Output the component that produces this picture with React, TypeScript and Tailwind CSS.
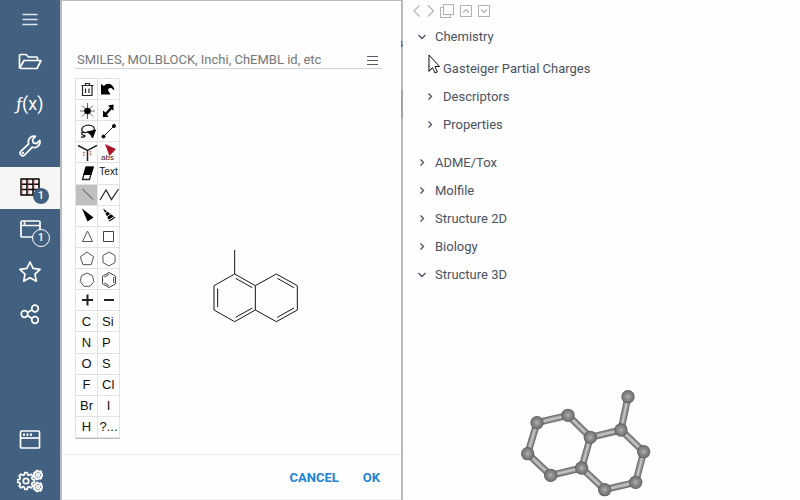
import React from "react";

type Child = { children: React.ReactNode };

function SideIcon({ children, className = "" }: Child & { className?: string }) {
  return (
    <svg viewBox="0 0 26 26" className={"h-[26px] w-[26px] " + className} fill="none" stroke="currentColor" strokeWidth="1.7" strokeLinejoin="round" aria-hidden="true">
      {children}
    </svg>
  );
}

function SideButton({ label, active = false, className = "h-[42px]", children }: Child & { label: string; active?: boolean; className?: string }) {
  return (
    <button
      type="button"
      aria-label={label}
      className={"relative flex w-full shrink-0 items-center justify-center " + (active ? "bg-[#f6f6f4] text-black " : "text-white ") + className}
    >
      {children}
    </button>
  );
}

function Gear({ x, y, r, teeth }: { x: number; y: number; r: number; teeth: number }) {
  const pts: string[] = [];
  for (let i = 0; i < teeth; i++) {
    for (const [o, k] of [[-0.34, 0.76], [-0.2, 1], [0.2, 1], [0.34, 0.76]]) {
      const a = ((i + o) / teeth) * Math.PI * 2;
      pts.push(`${x + Math.cos(a) * r * k},${y + Math.sin(a) * r * k}`);
    }
  }
  return (
    <>
      <polygon points={pts.join(" ")} />
      <circle cx={x} cy={y} r={r * 0.32} />
    </>
  );
}

function Sidebar() {
  return (
    <nav className="flex w-[60px] shrink-0 flex-col overflow-hidden bg-[#426080]">
      <SideButton label="Menu" className="h-[41px] pb-px">
        <SideIcon className="text-[#dfe5ec]">
          <path d="M5.500 7.500h15M5.500 12.500h15M5.500 17.500h15" />
        </SideIcon>
      </SideButton>
      <SideButton label="Open">
        <SideIcon>
          <path d="M2.500 19.500V6.500q0-1 1-1h5.500l2.500 2.500h8q1 0 1 1v2M2.500 19.500l4.500-8h17l-4 8H3.500" />
        </SideIcon>
      </SideButton>
      <SideButton label="Functions" className="h-[42px] pb-[2px]">
        <span className="text-[18px] leading-6">
          <i className="font-[Lato]">ƒ</i>(x)
        </span>
      </SideButton>
      <SideButton label="Tools">
        <SideIcon>
          <path d="M18.500 3.300a5.700 5.700 0 0 0-6.800 7.600L4 18.200a2.500 2.500 0 0 0 3.700 3.800l7.600-7.800a5.700 5.700 0 0 0 7.500-6.800l-3.300 3.200-3.100-.7-.9-3.200z" />
          <circle cx="6" cy="20" r=".4" />
        </SideIcon>
      </SideButton>
      <SideButton label="Tables, 1 open" active>
        <SideIcon>
          <path d="M4 4h18v16H4zM4 9.200h18M4 14.500h18M10 4v16M16 4v16" strokeWidth="1.500" />
          <path d="M5 5v14M11 5v14M17 5v8" stroke="#d23c3c" strokeWidth=".8" />
        </SideIcon>
        <span className="absolute top-[21px] left-[33px] flex h-4 w-4 items-center justify-center rounded-full bg-[#426080] text-[11px] font-medium text-white">1</span>
      </SideButton>
      <SideButton label="Views, 1 open">
        <SideIcon>
          <rect x="4" y="4" width="19" height="16" rx="1" />
          <path d="M4 8.500h19M7.500 4V8.500" />
        </SideIcon>
        <span className="absolute top-[20px] left-[32px] flex h-[18px] w-[18px] items-center justify-center rounded-full border border-white bg-[#426080] text-[11px] font-medium text-white">1</span>
      </SideButton>
      <SideButton label="Favorites">
        <SideIcon>
          <path d="M13 3l3.100 6.400 7 .9-5.100 4.900 1.300 7-6.300-3.400-6.300 3.400 1.300-7-5.100-4.900 7-.9z" />
        </SideIcon>
      </SideButton>
      <SideButton label="Share">
        <SideIcon>
          <circle cx="7.500" cy="13" r="3.300" />
          <circle cx="18" cy="7.500" r="3.300" />
          <circle cx="18" cy="19" r="3.300" />
          <path d="M10.500 11.500L15 9M10.500 14.500l4.500 3" />
        </SideIcon>
      </SideButton>
      <SideButton label="Windows" className="mt-auto h-[42px]">
        <SideIcon>
          <rect x="3.500" y="4" width="19" height="17" rx="1" />
          <path d="M3.500 11h19" />
          <path d="M6 7.700h2M9.500 7.700h2M13 7.700h2" strokeWidth="2.200" />
        </SideIcon>
      </SideButton>
      <SideButton label="Settings" className="h-[39px] pt-px">
        <SideIcon>
          <Gear x={9} y={13} r={8.500} teeth={8} />
          <Gear x={21} y={7} r={4.500} teeth={7} />
          <Gear x={21} y={19} r={4.500} teeth={7} />
        </SideIcon>
      </SideButton>
    </nav>
  );
}

const ring = (n: number, r: number, cx = 11, cy = 11) =>
  Array.from({ length: n }, (_, i) => {
    const a = (i / n) * Math.PI * 2 - Math.PI / 2;
    return `${cx + Math.cos(a) * r},${cy + Math.sin(a) * r}`;
  }).join(" ");

const drawings: Record<string, React.ReactNode> = {
  Clear: <path d="M5.500 6.500h12M9.500 6V4.500h4V6M6.500 7v9.500h9.500V7M9.500 9.500V14M13 9.500V14" strokeWidth="1.200" />,
  Undo: (
    <path d="M3 5l3 2C9 3.500 14 4 16.500 10.500l-1 .5C13 8 10.500 9 10 11l2.500 4.500H3z" fill="#000" stroke="none" />
  ),
  "Clean up": (
    <>
      <path d="M11.500 3v16M4 11h15M6 5.500l11 11M17 5.500l-11 11" stroke="#666" />
      <circle cx="11.500" cy="11" r="3" fill="#000" />
    </>
  ),
  Flip: <path d="M15.500 4.500v6l-2-1-4.500 5 1.500 2.500H5V10.500l2.500 2 4.500-5-2-2z" fill="#000" stroke="none" />,
  Lasso: (
    <>
      <path d="M13 10.500C8 13 5 10.500 6 7.500s6-4 9-3 4.500 3.500 2.500 5.500M7.500 11c-3 0-2 3 .5 3.500s0 2-3 1.500" strokeWidth="1.300" />
      <path d="M11.500 11l8-2-3 8-1.500-3z" fill="#000" stroke="#000" />
    </>
  ),
  "Single bond": (
    <>
      <path d="M5.500 15.500L16 5" />
      <circle cx="5.500" cy="15.500" r="1.600" fill="#000" />
      <circle cx="16" cy="5" r="1.600" fill="#000" />
    </>
  ),
  "Map atoms": (
    <>
      <path d="M2 3.500l9.500 5 9.500-5M11.500 8.500V19" strokeWidth="1.500" />
      <path d="M8.500 10q-2 2 0 4M14.500 9v4" stroke="#bd553d" strokeWidth="1.400" strokeDasharray="1.500 1" />
    </>
  ),
  "Absolute stereo": (
    <>
      <path d="M7 2l11 5-6.500 7z" fill="#aa1428" stroke="none" />
      <text x="3" y="18" fontSize="8" fill="#501018" stroke="none">abs</text>
    </>
  ),
  Bond: <path d="M6.500 5L17 15.500" stroke="#444" />,
  Chain: <path d="M2 16L8 6l5.500 9.500 7-10.500" strokeWidth="1.200" />,
  Wedge: <path d="M6 3.500l11.500 9-6 4z" fill="#000" stroke="none" />,
  "Hashed wedge": (
    <>
      <path d="M5 3.500l12.500 9-6 4z" fill="#000" stroke="none" />
      <path d="M11 5l-5 4M14.500 7.500l-6.500 5M18 10.500l-8 5" stroke="#fff" />
    </>
  ),
  Triangle: <path d="M11.500 5l5 10.500h-10z" stroke="#555" />,
  Square: <path d="M5.500 5.500h10v10h-10z" stroke="#444" />,
  Pentagon: <polygon points={ring(5, 7)} stroke="#555" />,
  Hexagon: <polygon points={ring(6, 7)} stroke="#555" />,
  Heptagon: <polygon points={ring(7, 7)} stroke="#555" />,
  Benzene: (
    <g stroke="#444">
      <polygon points={ring(6, 7.5)} />
      <path d="M6.300 8.100L11 5.400M15.700 8.100v5.800M6.300 13.900l4.700 2.700" />
    </g>
  ),
  Plus: <path d="M6 10h11M11.500 4.500v11" strokeWidth="2" />,
  Minus: <path d="M6 10h10" strokeWidth="2" />,
  Eraser: (
    <>
      <path d="M10 4h7l-3.500 12.500H6.500z" fill="#fff" strokeWidth="1.300" />
      <path d="M10 4h8l-2.800 8H7.200z" fill="#000" stroke="none" />
    </>
  ),
};
const rows: [string, string][] = [
  ["Clear", "Undo"], ["Clean up", "Flip"], ["Lasso", "Single bond"], ["Map atoms", "Absolute stereo"], ["Eraser", "Text"],
  ["Bond", "Chain"], ["Wedge", "Hashed wedge"], ["Triangle", "Square"], ["Pentagon", "Hexagon"], ["Heptagon", "Benzene"],
  ["Plus", "Minus"], ["C", "Si"], ["N", "P"], ["O", "S"], ["F", "Cl"], ["Br", "I"], ["H", "?..."],
];

function Tool({ name, right }: { name: string; right: boolean }) {
  const drawing = drawings[name];
  const base = "flex min-h-0 items-center overflow-hidden border-r border-b border-[#e2e2e2] text-[#111] ";
  if (drawing) {
    return (
      <button type="button" aria-label={name} className={base + "justify-center " + (name === "Bond" ? "bg-[#bebfc0]" : "")}>
        <svg viewBox="0 0 22 21" className="h-[21px] w-[22px] shrink-0" fill="none" stroke="#222" strokeWidth="1">
          {drawing}
        </svg>
      </button>
    );
  }
  const size = name === "Text" ? "pb-1 text-[10px] " : "text-[13px] ";
  const side = right && name !== "I" && name !== "Text" && name !== "?..." ? "justify-start pl-1" : "justify-center";
  return (
    <button type="button" className={base + size + side}>
      {name}
    </button>
  );
}

function Sketch() {
  return (
    <svg viewBox="0 0 330 270" className="mt-[162px] ml-[80px] h-[90px] w-[110px]" fill="none" stroke="#151515" strokeWidth="3" role="img" aria-label="1-methylnaphthalene">
      <path d="M104 30v72M104 102l-62 35v73l62 35 62-35v-73zM166 137l63-35 63 35v73l-63 35-63-35" />
      <path d="M107 115l50 28M53 146v55M107 232l50-28M232 115l50 28M232 232l50-28" />
    </svg>
  );
}

function Dialog() {
  return (
    <section role="dialog" aria-label="Structure editor" className="flex min-w-0 flex-1 flex-col bg-[#fefefe]">
      <div className="mt-[49px] mr-[19px] ml-[13px] flex h-[19px] items-center border-b border-[#d3d3d3] pt-[2px]">
        <input
          aria-label="Structure"
          placeholder="SMILES, MOLBLOCK, Inchi, ChEMBL id, etc"
          className="min-w-0 flex-1 bg-transparent px-[2px] text-[13px] leading-[18px] outline-none placeholder:text-[#777]"
        />
        <button type="button" aria-label="Options" className="pr-1">
          <svg viewBox="0 0 11 11" className="h-[11px] w-[11px]" stroke="#555b66">
            <path d="M0 1.500h11M0 5.500h11M0 9.500h11" />
          </svg>
        </button>
      </div>
      <div className="mt-[9px] ml-[13px] flex">
        <div className="grid h-[361px] w-[45px] shrink-0 auto-rows-fr grid-cols-2 border-t border-b border-l border-[#e2e2e2] border-b-[#bbb] bg-white font-['Liberation_Sans',sans-serif]">
          {rows.map(([a, b]) => (
            <React.Fragment key={a}>
              <Tool name={a} right={false} />
              <Tool name={b} right />
            </React.Fragment>
          ))}
        </div>
        <Sketch />
      </div>
      <footer className="mt-auto flex h-[46px] shrink-0 items-center justify-end gap-6 border-t border-b border-[#ededed] pt-[2px] pr-[21px] text-[13px] font-bold text-[#2083d5]">
        <button type="button">CANCEL</button>
        <button type="button">OK</button>
      </footer>
    </section>
  );
}

function TreeItem({ label, open = false, nested = false, covered = false }: { label: string; open?: boolean; nested?: boolean; covered?: boolean }) {
  return (
    <button type="button" aria-expanded={open} className={"relative flex h-7 items-center gap-2 text-left " + (nested ? "pl-[22px]" : "pl-[14px]")}>
      <svg viewBox="0 0 10 10" className="h-[10px] w-[10px]" fill="none" stroke="#4a5261" strokeWidth="1.300">
        <path d={open ? "M1.500 3L5 6.500l3.500-3.500" : "M3.500 1.500L6.500 4.500 3.500 7.500"} />
      </svg>
      {label}
      {covered && (
        <svg viewBox="0 0 12 20" className="absolute -top-px left-[25px] h-5 w-3" fill="#fff" stroke="#111" aria-hidden="true">
          <path d="M1 1v16l3.500-3.500 2.500 5.500 2.300-1-2.300-5.500h4.500z" />
        </svg>
      )}
    </button>
  );
}

const atoms = [
  [354, 50], [333, 150], [401, 215], [377, 307], [284, 329], [215, 264],
  [241, 172], [174, 106], [81, 128], [53, 221], [122, 286],
];
const bonds = [[0, 1], [1, 2], [2, 3], [3, 4], [4, 5], [5, 6], [6, 1], [6, 7], [7, 8], [8, 9], [9, 10], [10, 5]];

function Model3D() {
  return (
    <svg viewBox="0 0 450 360" className="mt-auto ml-[107px] h-[120px] w-[150px] shrink-0" role="img" aria-label="3D structure">
      <defs>
        <radialGradient id="atom">
          <stop offset="0" stopColor="#b4b4b4" />
          <stop offset=".35" stopColor="#919191" />
          <stop offset=".8" stopColor="#777" />
          <stop offset="1" stopColor="#585858" />
        </radialGradient>
      </defs>
      {[["#707070", 21], ["#949494", 14], ["#c4c4c4", 6]].map(([color, width]) => (
        <g key={color} stroke={String(color)} strokeWidth={width}>
          {bonds.map(([a, b]) => (
            <line key={a + "-" + b} x1={atoms[a][0]} y1={atoms[a][1]} x2={atoms[b][0]} y2={atoms[b][1]} />
          ))}
        </g>
      ))}
      {atoms.map(([x, y]) => (
        <circle key={x} cx={x} cy={y} r="20" fill="url(#atom)" />
      ))}
    </svg>
  );
}

function InfoPanel() {
  return (
    <aside className="flex w-[397px] shrink-0 flex-col bg-[#fefefe] text-[13px] text-[#4a5261]">
      <div className="flex h-[23px] items-center pb-px pl-[9px]">
        {[
          ["Back", "M7.500 2.500L2 8l5.500 5.500", "w-[14px]"],
          ["Forward", "M2 2.500L7.500 8 2 13.500", "w-[13px]"],
          ["Copy", "M4.500 1.500h10v10h-10zM4.500 4.500h-3v10h10v-3", "w-[19px]"],
          ["Collapse all", "M2.500 2.500h11v11h-11zM5 9.500l3-3 3 3", "w-[18px]"],
          ["Expand all", "M2.500 2.500h11v11h-11zM5 6.500l3 3 3-3", "w-[18px]"],
        ].map(([label, d, width]) => (
          <button key={label} type="button" aria-label={label} className={width}>
            <svg viewBox="0 0 16 16" className="h-4 w-4" fill="none" stroke="#b3b3b3" strokeWidth="1.100" strokeLinejoin="round">
              <path d={d} />
            </svg>
          </button>
        ))}
      </div>
      <div className="flex flex-col">
        <TreeItem label="Chemistry" open />
        <div className="mt-1 mb-[10px] flex flex-col">
          <TreeItem label="Gasteiger Partial Charges" nested covered />
          <TreeItem label="Descriptors" nested />
          <TreeItem label="Properties" nested />
        </div>
        <TreeItem label="ADME/Tox" />
        <TreeItem label="Molfile" />
        <TreeItem label="Structure 2D" />
        <TreeItem label="Biology" />
        <TreeItem label="Structure 3D" open />
      </div>
      <Model3D />
    </aside>
  );
}

export default function App() {
  return (
    <div className="flex h-screen overflow-hidden bg-[#fefefe] font-[Roboto,sans-serif]">
      <Sidebar />
      <main className="flex min-w-0 flex-1 bg-[#b9b9c2] pt-px pl-[2px]">
        <Dialog />
        <div className="flex w-[2px] shrink-0 flex-col overflow-hidden">
          <div className="mt-9 flex h-[14px] justify-end text-[11px] leading-[14px] text-[#333]">s</div>
          <div className="mt-[39px] h-7 bg-[#a2a2a9]" />
        </div>
      </main>
      <InfoPanel />
    </div>
  );
}
